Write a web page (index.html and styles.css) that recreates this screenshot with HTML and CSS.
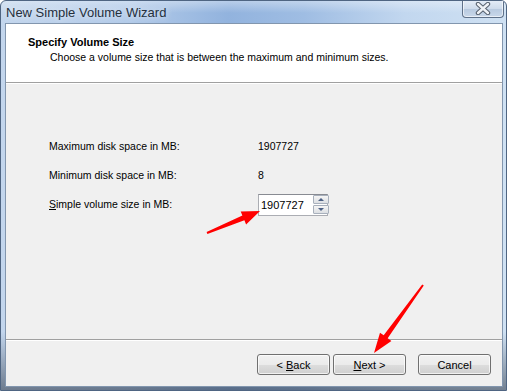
FILE: index.html
```html
<!DOCTYPE html>
<html lang="en">
<head>
    <meta charset="UTF-8">
    <title>New Simple Volume Wizard</title>
    <link rel="stylesheet" href="styles.css">
</head>
<body>
    <div class="window">
        <div class="titlebar">
            <span class="title">New Simple Volume Wizard</span>
            <button class="close-btn" aria-label="Close">
                <svg width="18" height="13" viewBox="0 0 18 13">
                    <path d="M4 2 L14 11 M14 2 L4 11" stroke="#56606e" stroke-width="4.4" stroke-linecap="round"/>
                    <path d="M4 2 L14 11 M14 2 L4 11" stroke="#eef1f5" stroke-width="2.4" stroke-linecap="round"/>
                </svg>
            </button>
        </div>

        <div class="client">
            <div class="header">
                <div class="header-title">Specify Volume Size</div>
                <div class="header-sub">Choose a volume size that is between the maximum and minimum sizes.</div>
            </div>

            <div class="body">
                <div class="size-grid">
                    <span>Maximum disk space in MB:</span>
                    <span>1907727</span>
                    <span>Minimum disk space in MB:</span>
                    <span>8</span>
                    <span><u>S</u>imple volume size in MB:</span>
                    <div class="spin">
                        <input type="text" class="spin-input" value="1907727">
                        <div class="spin-btns">
                            <span class="spin-btn"><i class="tri-up"></i></span>
                            <span class="spin-btn"><i class="tri-down"></i></span>
                        </div>
                    </div>
                </div>
            </div>

            <div class="footer">
                <button class="wiz-btn">&lt; <u>B</u>ack</button>
                <button class="wiz-btn"><u>N</u>ext &gt;</button>
                <button class="wiz-btn cancel">Cancel</button>
            </div>
        </div>

        <!-- red annotation arrows -->
        <svg class="marks" width="507" height="391" viewBox="0 0 507 391">
            <polygon fill="#f00" points="207.4,233.9 244.4,220.2 246.1,224.4 260,211 240.7,211.4 242.4,215.6 206.6,232.1"/>
            <polygon fill="#f00" points="423.8,285.6 387.7,338.3 391.4,340.9 374,353 380.0,332.7 383.7,335.3 422.2,284.4"/>
        </svg>
    </div>
</body>
</html>
```

FILE: styles.css
```css
body {
    margin: 0;
    font-family: 'Liberation Sans', Arial, sans-serif;
    font-size: 10.5px;
    color: #000;
    background: #fff;
}
.window {
    position: relative;
    width: 507px;
    height: 391px;
    box-sizing: border-box;
    border: 1px solid #4f6582;
    border-radius: 6px 6px 0 0;
    background:
        linear-gradient(to bottom, rgba(255,255,255,0.35) 0, rgba(255,255,255,0) 12px, rgba(0,0,0,0) 85%, rgba(40,50,65,0.55) 100%),
        linear-gradient(to right, #c3d6ed 0%, #b3cbe9 25%, #92b3de 45%, #9fbde3 60%, #c2d7ef 80%, #cfe1f3 100%);
    display: flex;
    flex-direction: column;
    overflow: hidden;
}
.titlebar {
    height: 22px;
    display: flex;
    align-items: flex-start;
    justify-content: space-between;
    padding-left: 5px;
}
.title {
    font-size: 13px;
    color: #25303d;
    margin-top: 4px;
    text-shadow: 0 0 6px rgba(255,255,255,0.9);
}
.close-btn {
    width: 42px;
    height: 18px;
    margin-top: -1px;
    margin-right: 2px;
    padding: 0;
    border: 1px solid #5f7189;
    border-top: none;
    border-radius: 0 0 4px 4px;
    background: linear-gradient(to bottom, #e6eef8 0%, #cfdcec 50%, #b7c9df 51%, #c9d8ea 100%);
    box-shadow: inset 0 0 0 1px rgba(255,255,255,0.6);
    display: flex;
    align-items: center;
    justify-content: center;
}
.client {
    margin: 0 3px 3px 4px;
    flex: 1;
    display: flex;
    flex-direction: column;
    border: 1px solid #8296ae;
    background: #f0f0f0;
}
.header {
    height: 59px;
    background: #fff;
    border-bottom: 1px solid #a0a0a0;
    box-shadow: 0 1px 0 #fff;
    padding: 11px 0 0 22px;
    box-sizing: border-box;
}
.header-title {
    font-weight: bold;
    font-size: 11px;
    line-height: 14px;
}
.header-sub {
    padding-left: 22px;
    line-height: 15px;
    margin-top: 1px;
}
.body {
    flex: 1;
    padding: 52px 0 0 43px;
    border-bottom: 1px solid #a0a0a0;
}
.size-grid {
    display: grid;
    grid-template-columns: 209px auto;
    grid-auto-rows: 22px;
    row-gap: 7px;
    align-items: center;
}
.spin {
    display: flex;
    width: 70px;
    height: 22px;
    box-sizing: border-box;
    border: 1px solid #abadb3;
    border-top-color: #888b92;
    background: #fff;
    margin-top: 2px;
}
.spin-input {
    width: 52px;
    border: none;
    padding: 0 0 0 2px;
    font: 11px 'Liberation Sans', Arial, sans-serif;
    color: #000;
    background: transparent;
    outline: none;
}
.spin-btns {
    display: flex;
    flex-direction: column;
    gap: 1px;
    padding: 0 1px 1px 0;
}
.spin-btn {
    width: 14px;
    height: 9px;
    border: 1px solid #a8b0bc;
    border-radius: 1px;
    background: linear-gradient(to bottom, #f5f5f5, #dcdfe3);
    display: flex;
    align-items: center;
    justify-content: center;
}
.tri-up {
    border-left: 3px solid transparent;
    border-right: 3px solid transparent;
    border-bottom: 3px solid #4d6185;
}
.tri-down {
    border-left: 3px solid transparent;
    border-right: 3px solid transparent;
    border-top: 3px solid #4d6185;
}
.footer {
    height: 46px;
    box-shadow: inset 0 1px 0 #fff;
    display: flex;
    align-items: flex-start;
    padding: 14px 11px 0 0;
    box-sizing: border-box;
    justify-content: flex-end;
    gap: 3px;
}
.wiz-btn {
    width: 73px;
    height: 21px;
    padding: 0;
    font: 11px 'Liberation Sans', Arial, sans-serif;
    color: #000;
    border: 1px solid #707070;
    border-radius: 3px;
    background: linear-gradient(to bottom, #f2f2f2 0%, #ebebeb 50%, #dddddd 51%, #cfcfcf 100%);
    box-shadow: inset 0 0 0 1px rgba(255,255,255,0.7);
}
.wiz-btn.cancel {
    margin-left: 9px;
}
.marks {
    position: absolute;
    left: -1px;
    top: -1px;
    pointer-events: none;
}
```
